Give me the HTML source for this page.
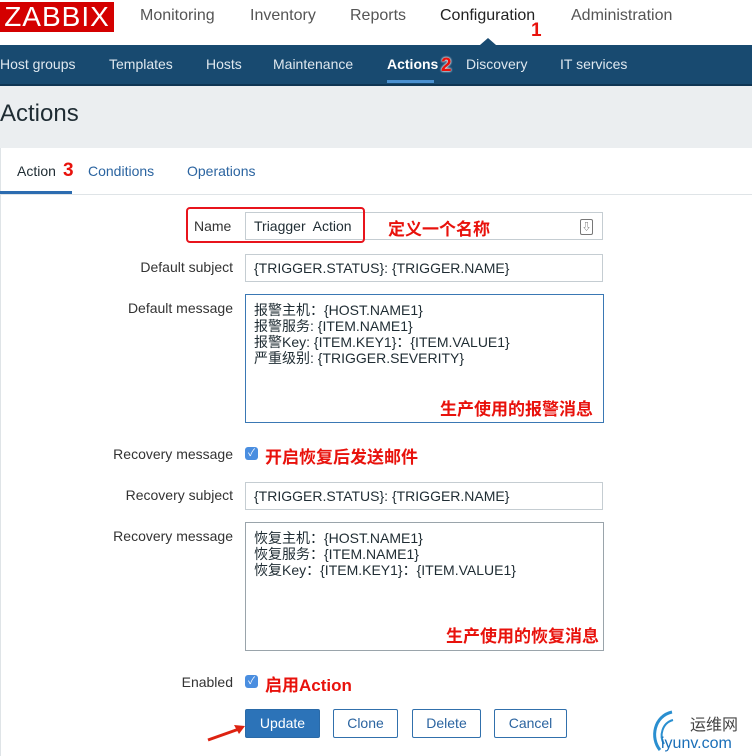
<!DOCTYPE html><html><head><meta charset="utf-8"><style>
body{margin:0;width:752px;height:756px;overflow:hidden;background:#fff;font-family:"Liberation Sans","Noto Sans CJK SC",sans-serif;position:relative;color:#1f2c33}
.a{position:absolute;white-space:nowrap}
.top{font-size:16px;color:#555;top:7px}
.nav{position:absolute;left:0;top:45px;width:752px;height:39px;background:#184a70;border-bottom:2px solid #0f3553}
.nav span{position:absolute;top:11px;color:#dfe8ef;font-size:14px}
.red{color:#e8120c;font-weight:bold}
.num{color:#e8120c;font-weight:bold;font-size:19px;text-shadow:0 0 2px #fff,0 0 2px #fff}
.lbl{font-size:14px;color:#333;text-align:right;right:519px}
.in{position:absolute;left:245px;width:358px;border:1px solid #c5cdd2;background:#fff;font-size:14px;box-sizing:border-box;padding:0 8px;line-height:26px}
.ta{position:absolute;left:245px;width:359px;border:1px solid #3a78b4;background:#fff;font-size:14px;box-sizing:border-box;padding:7px 8px;line-height:16px}
.cb{position:absolute;left:245px;width:13px;height:13px;background:#4a8ee0;border-radius:3px;color:#fff;font-size:10px;text-align:center;line-height:13px}
.btn{position:absolute;top:709px;height:29px;border:1px solid #3170ac;border-radius:2px;box-sizing:border-box;color:#2b64a0;font-size:14px;text-align:center;line-height:27px;background:#fff}
</style></head><body>
<div class="a" style="left:0;top:2px;width:114px;height:30px;background:#d40000;color:#fff;font-size:28px;line-height:30px;text-align:center;letter-spacing:1px">ZABBIX</div>
<div class="a top" style="left:140px">Monitoring</div>
<div class="a top" style="left:250px">Inventory</div>
<div class="a top" style="left:350px">Reports</div>
<div class="a top" style="left:440px;color:#222">Configuration</div>
<div class="a top" style="left:571px">Administration</div>
<div class="a num" style="left:531px;top:20px">1</div>
<div class="nav">
<span style="left:0">Host groups</span><span style="left:109px">Templates</span><span style="left:206px">Hosts</span><span style="left:273px">Maintenance</span><span style="left:387px;color:#fff;font-weight:bold">Actions</span><span style="left:466px">Discovery</span><span style="left:560px">IT services</span>
<div style="position:absolute;left:387px;top:35px;width:47px;height:3px;background:#4a90d0"></div>
<div style="position:absolute;left:480px;top:-7px;width:0;height:0;border-left:8px solid transparent;border-right:8px solid transparent;border-bottom:7px solid #184a70"></div>
</div>
<div class="a num" style="left:441px;top:55px">2</div>
<div class="a" style="left:0;top:86px;width:752px;height:62px;background:#ebeef0"></div>
<div class="a" style="left:0;top:100px;font-size:24px;color:#1f2c33">Actions</div>
<div class="a" style="left:0;top:194px;width:752px;height:1px;background:#dfe4e7"></div>
<div class="a" style="left:0;top:148px;width:1px;height:608px;background:#dfe4e7"></div>
<div class="a" style="left:17px;top:163px;font-size:14px">Action</div>
<div class="a num" style="left:63px;top:160px">3</div>
<div class="a" style="left:88px;top:163px;font-size:14px;color:#2b64a0">Conditions</div>
<div class="a" style="left:187px;top:163px;font-size:14px;color:#2b64a0">Operations</div>
<div class="a" style="left:0;top:191px;width:72px;height:3px;background:#2c6cb0"></div>

<div class="in" style="top:212px;height:28px">Triagger&nbsp; Action</div>
<div class="a" style="left:186px;top:207px;width:175px;height:32px;border:2px solid #e8141c;border-radius:4px"></div>
<div class="a lbl" style="top:218px;left:194px;right:auto">Name</div>
<div class="a red" style="left:388px;top:215px;font-size:17px">定义一个名称</div>
<div class="a" style="left:580px;top:219px;width:11px;height:14px;border:1px solid #777;border-radius:2px;font-size:9px;text-align:center;color:#555">⇩</div>

<div class="a lbl" style="top:259px">Default subject</div>
<div class="in" style="top:254px;height:28px">{TRIGGER.STATUS}: {TRIGGER.NAME}</div>
<div class="a lbl" style="top:300px">Default message</div>
<div class="ta" style="top:294px;height:129px">报警主机：{HOST.NAME1}<br>报警服务: {ITEM.NAME1}<br>报警Key: {ITEM.KEY1}：{ITEM.VALUE1}<br>严重级别: {TRIGGER.SEVERITY}</div>
<div class="a red" style="left:440px;top:395px;font-size:17px">生产使用的报警消息</div>

<div class="a lbl" style="top:446px">Recovery message</div>
<div class="cb" style="top:447px">✓</div>
<div class="a red" style="left:265px;top:443px;font-size:17px">开启恢复后发送邮件</div>
<div class="a lbl" style="top:487px">Recovery subject</div>
<div class="in" style="top:482px;height:28px">{TRIGGER.STATUS}: {TRIGGER.NAME}</div>
<div class="a lbl" style="top:528px">Recovery message</div>
<div class="ta" style="top:522px;height:129px;border-color:#9aa4ab">恢复主机：{HOST.NAME1}<br>恢复服务：{ITEM.NAME1}<br>恢复Key：{ITEM.KEY1}：{ITEM.VALUE1}</div>
<div class="a red" style="left:446px;top:622px;font-size:17px">生产使用的恢复消息</div>

<div class="a lbl" style="top:674px">Enabled</div>
<div class="cb" style="top:675px">✓</div>
<div class="a red" style="left:265px;top:671px;font-size:17px">启用Action</div>

<div class="btn" style="left:245px;width:75px;background:#2c73b8;color:#fff;border-color:#2a6aa8">Update</div>
<div class="btn" style="left:333px;width:65px">Clone</div>
<div class="btn" style="left:412px;width:69px">Delete</div>
<div class="btn" style="left:494px;width:73px">Cancel</div>
<svg class="a" style="left:205px;top:720px" width="45" height="25"><path d="M3 20 L34 9" stroke="#d21" stroke-width="3"/><path d="M40 6 L29 5 L34 14Z" fill="#d21"/></svg>
<svg class="a" style="left:648px;top:708px" width="30" height="46"><path d="M24 4 C6 8 2 30 12 42" stroke="#2a8fd0" stroke-width="3" fill="none"/><path d="M25 12 C14 15 11 28 16 36" stroke="#2a8fd0" stroke-width="2" fill="none"/></svg>
<div class="a" style="left:690px;top:711px;font-size:16px;color:#444">运维网</div>
<div class="a" style="left:661px;top:735px;font-size:16px;color:#1a6fb8">iyunv.com</div>
</body></html>
